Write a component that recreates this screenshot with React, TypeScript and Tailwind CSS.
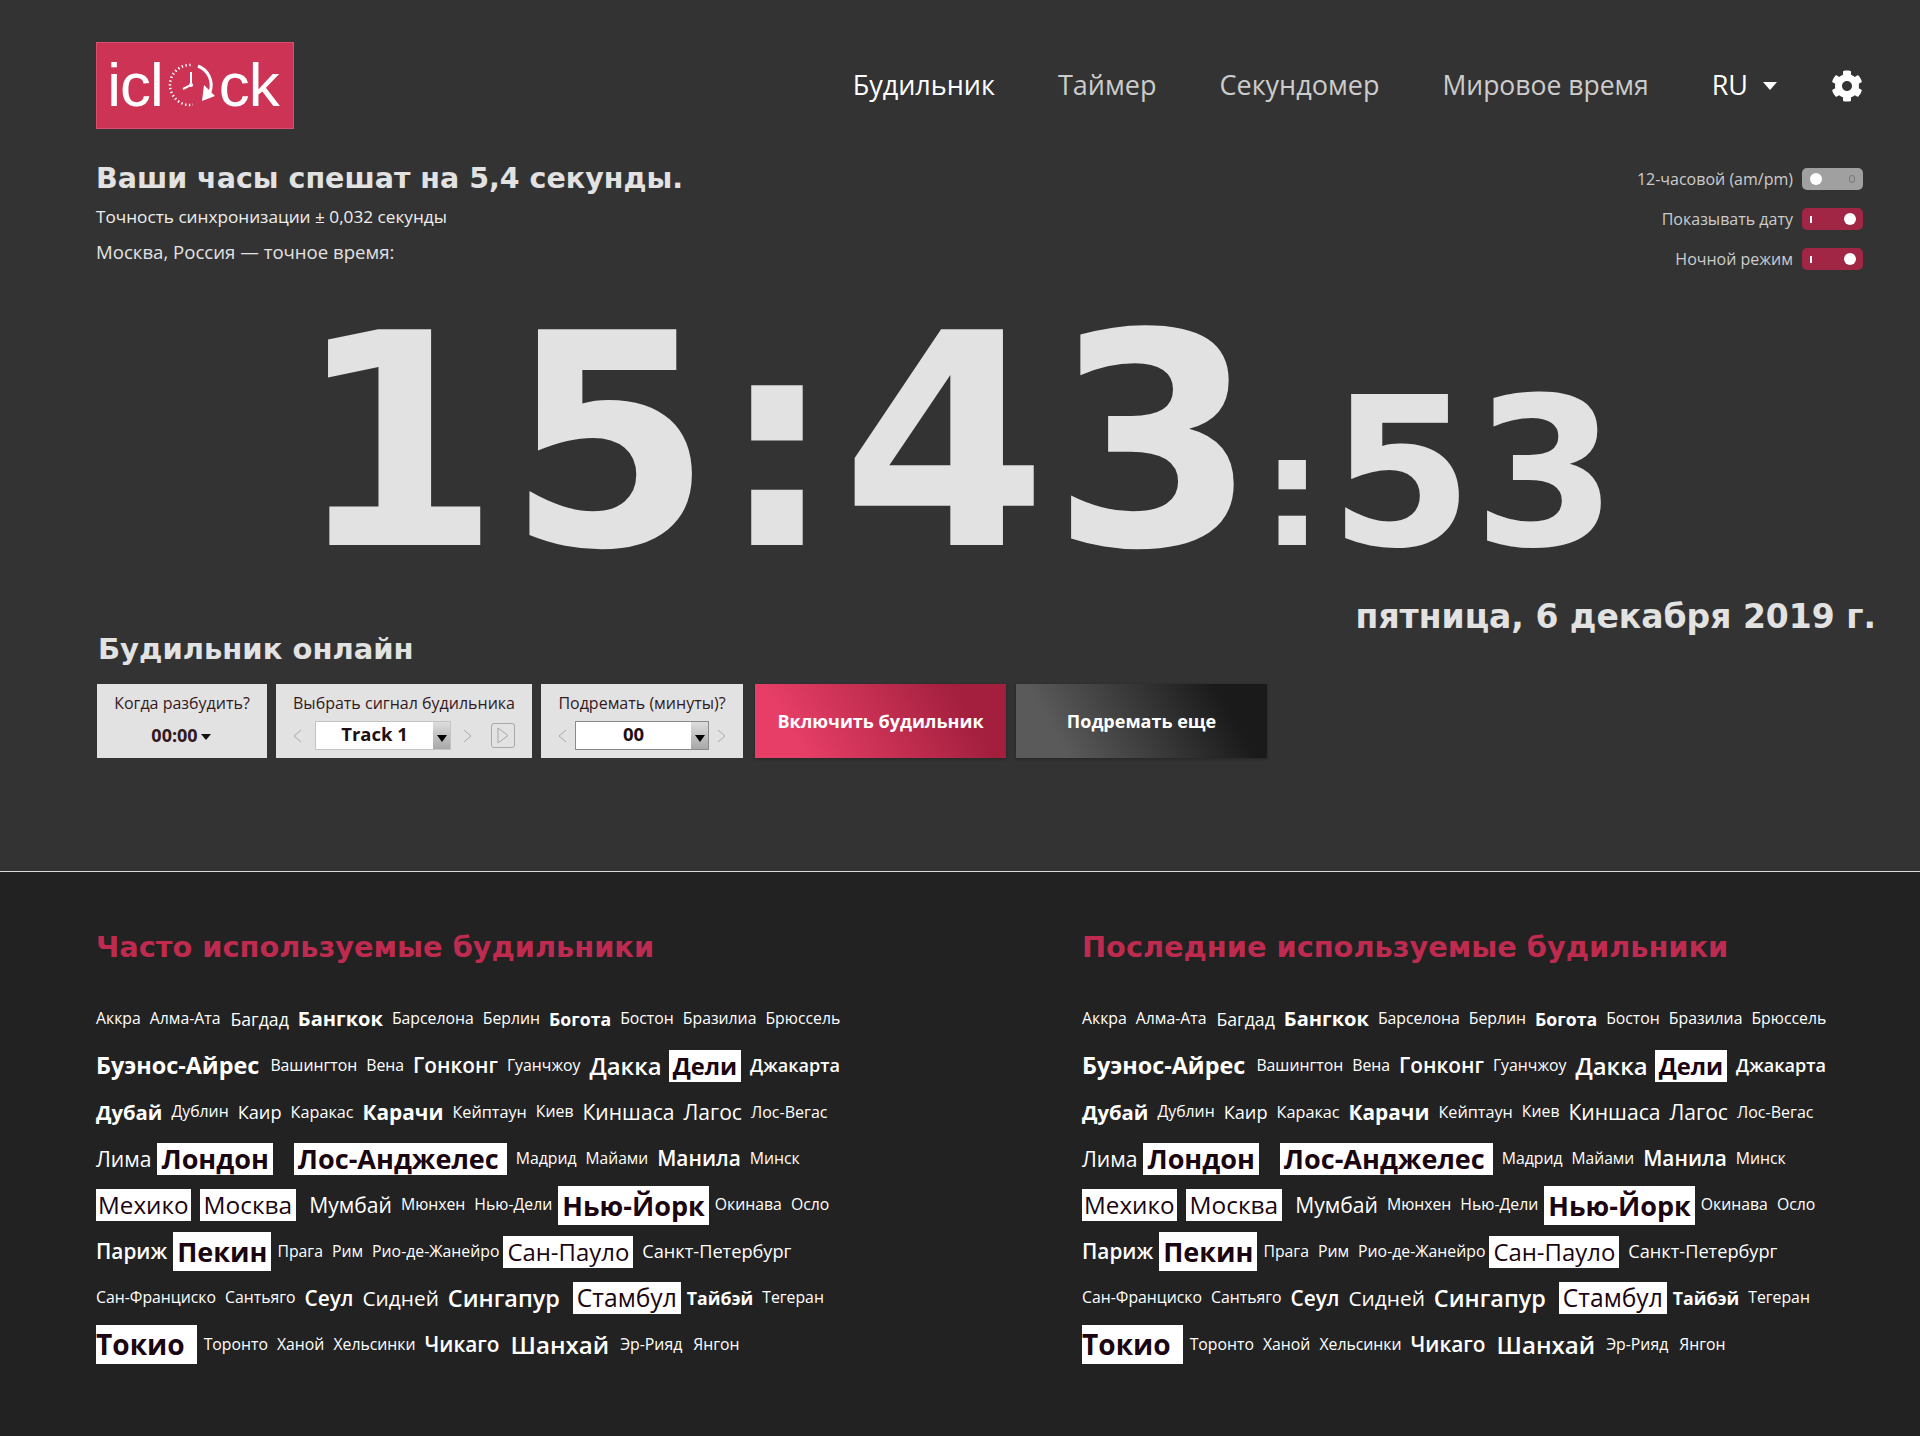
import { FaCog } from 'react-icons/fa';

// text, size, weight (0 normal, 1 semibold, 2 bold), white box classes, extra classes
type Word = [string, number, 0 | 1 | 2, string?, string?];

const rows: Word[][] = [
  [['Аккра', 15.2, 0], ['Алма-Ата', 15.2, 0], ['Багдад', 17, 0, undefined, 'ml-[1px]'], ['Бангкок', 19.3, 2], ['Барселона', 15.2, 0], ['Берлин', 15.2, 0], ['Богота', 17, 2], ['Бостон', 15.2, 0], ['Бразилиа', 15.2, 0], ['Брюссель', 15.2, 0]],
  [['Буэнос-Айрес', 22.5, 2], ['Вашингтон', 15.2, 0, undefined, 'ml-[2px]'], ['Вена', 15.2, 0], ['Гонконг', 20, 1], ['Гуанчжоу', 15.2, 0], ['Дакка', 23, 1], ['Дели', 22.8, 2, 'px-1 leading-[32px] ml-[-2px]'], ['Джакарта', 17.4, 1]],
  [['Дубай', 19.5, 2], ['Дублин', 15.2, 0], ['Каир', 17.5, 0], ['Каракас', 15.6, 0], ['Карачи', 20, 2], ['Кейптаун', 15.6, 0], ['Киев', 15.2, 0], ['Киншаса', 20.3, 0], ['Лагос', 20.3, 0], ['Лос-Вегас', 15.4, 0]],
  [['Лима', 20.3, 0], ['Лондон', 26, 2, 'px-1 leading-[32px] ml-[-3px]'], ['Лос-Анджелес', 26, 2, 'pl-1 pr-2 leading-[32px] ml-[12px]'], ['Мадрид', 15.2, 0], ['Майами', 15, 0], ['Манила', 20, 1], ['Минск', 15.2, 0]],
  [['Мехико', 23.3, 0, 'px-0.5 leading-[32px]'], ['Москва', 23.5, 0, 'px-1 leading-[32px]'], ['Мумбай', 20.3, 0, undefined, 'ml-1'], ['Мюнхен', 15.2, 0], ['Нью-Дели', 15.2, 0], ['Нью-Йорк', 26, 2, 'px-1 leading-[39px] mx-[-3px]'], ['Окинава', 15.2, 0], ['Осло', 15.2, 0]],
  [['Париж', 20, 1], ['Пекин', 26, 2, 'px-1 leading-[39px] mx-[-3px]'], ['Прага', 15.2, 0], ['Рим', 15.2, 0], ['Рио-де-Жанейро', 15.2, 0], ['Сан-Пауло', 23, 0, 'px-1 leading-[32px] ml-[-5px]'], ['Санкт-Петербург', 17.5, 0]],
  [['Сан-Франциско', 15.2, 0], ['Сантьяго', 15.2, 0], ['Сеул', 20, 1], ['Сидней', 20, 0], ['Сингапур', 22.5, 1], ['Стамбул', 23.7, 0, 'px-1 leading-[32px] ml-1 mr-[-3px]'], ['Тайбэй', 17, 2], ['Тегеран', 15.2, 0]],
  [['Токио', 27, 2, 'pr-3 leading-[39px] mr-[-2px]'], ['Торонто', 15.2, 0], ['Ханой', 15.2, 0], ['Хельсинки', 15.2, 0], ['Чикаго', 20, 1], ['Шанхай', 23.2, 1, undefined, 'ml-[2px]'], ['Эр-Рияд', 15.2, 0, undefined, 'ml-[2px]'], ['Янгон', 15.2, 0, undefined, 'ml-[2px]']],
];

const CityRows = () => (
  <div className="mt-[29px] flex flex-col">
    {rows.map((row, i) => (
      <div key={i} className="flex h-[46.5px] items-center gap-[9px] whitespace-nowrap">
        {row.map(([name, size, weight, box, extra]) => (
          <span
            key={name}
            style={{ fontSize: size * 1.04, fontWeight: weight === 2 ? 700 : weight === 1 ? 600 : 400 }}
            className={box ? `bg-white text-[#1a0510] ${box}` : `text-white ${extra ?? ''}`}
          >
            {name}
          </span>
        ))}
      </div>
    ))}
  </div>
);

const Toggle = ({ label, on }: { label: string; on: boolean }) => (
  <div className="flex h-[40px] items-center justify-end gap-[9px]">
    <span className="text-[16px] text-[#cccccc]">{label}</span>
    <div className={`relative h-[22px] w-[61px] rounded-[5px] ${on ? 'bg-[#a12645]' : 'bg-[#a0a0a0]'}`}>
      {on ? (
        <>
          <span className="absolute left-[8px] top-[8px] h-[7px] w-[2px] bg-white" />
          <span className="absolute right-[7px] top-[5px] h-[12px] w-[12px] rounded-full bg-white" />
        </>
      ) : (
        <>
          <span className="absolute left-[8px] top-[5px] h-[12px] w-[12px] rounded-full bg-white" />
          <span className="absolute right-[8px] top-[7px] h-[8px] w-[6px] rounded-full border border-[#777777]" />
        </>
      )}
    </div>
  </div>
);

const LogoClock = () => (
  <svg width="50" height="50" viewBox="0 0 50 50" fill="none" className="mx-[3px] mt-[1px]">
    <clipPath id="left">
      <rect x="0" y="0" width="27" height="50" />
    </clipPath>
    <circle cx="24" cy="25" r="20" stroke="white" strokeWidth="2.6" pathLength="100" strokeDasharray="1.1 2" clipPath="url(#left)" />
    <path d="M32 6 A20.5 20.5 0 0 1 44 32" stroke="white" strokeWidth="3" />
    <path d="M36 41 L49 36 L38 25 Z" fill="white" />
    <path d="M25 12 V25 L17 29" stroke="white" strokeWidth="2" />
    <circle cx="25" cy="25" r="2" fill="white" />
  </svg>
);

const SelectBox = ({ value, width, strong }: { value: string; width: string; strong?: boolean }) => (
  <div className={`flex h-[29px] ${width} border ${strong ? 'border-[#8a8a8a]' : 'border-[#c4c4c4]'} bg-white`}>
    <span className="flex-1 pb-[3px] text-center text-[18.5px] font-bold leading-[24px] text-[#220e12]">{value}</span>
    <span className="flex w-[17px] items-end justify-center bg-gradient-to-b from-[#dddddd] to-[#a8a8a8] pb-[7px]">
      <span className="h-0 w-0 border-x-[5px] border-t-[7px] border-x-transparent border-t-black" />
    </span>
  </div>
);

const Chevron = ({ left }: { left?: boolean }) => (
  <svg width="9" height="14" viewBox="0 0 9 14" fill="none" stroke="#a8a8a8" strokeWidth="1">
    <path d={left ? 'M8 1 L1 7 L8 13' : 'M1 1 L8 7 L1 13'} />
  </svg>
);

const App = () => (
  <div className="flex min-h-[1436px] flex-col bg-[#333333] font-['Open_Sans',sans-serif] text-[#e2e2e2]">
    <div className="h-[871px] pl-[96px] pr-[57px] pt-[42px]">
      <header className="flex items-center justify-between">
        <div className="flex h-[87px] w-[198px] items-center justify-center border border-[#d9506e] bg-[#cc3355] pb-[2px] pr-[4px] font-['Liberation_Sans',sans-serif] text-[62px] leading-none tracking-[-1px] text-white">
          <span>icl</span>
          <LogoClock />
          <span>ck</span>
        </div>
        <nav className="flex items-center gap-[63px] text-[27px] text-[#cccccc]">
          <span className="text-white">Будильник</span>
          <span>Таймер</span>
          <span>Секундомер</span>
          <span className="text-[26.5px]">Мировое время</span>
          <span className="flex items-center gap-[15px] text-white">
            RU
            <span className="h-0 w-0 border-x-[7px] border-t-[8px] border-x-transparent border-t-white" />
          </span>
          <FaCog className="ml-[-9px] text-[32px] text-white" />
        </nav>
      </header>

      <div className="mt-[29px] flex justify-between">
        <div>
          <h1 className="font-['DejaVu_Sans',sans-serif] text-[28.5px] font-bold leading-[42px]">Ваши часы спешат на 5,4 секунды.</h1>
          <p className="mt-[5px] text-[17.2px] leading-[24px] text-[#eeeeee]">Точность синхронизации ± 0,032 секунды</p>
          <p className="mt-[10px] text-[18.6px] leading-[26px]">Москва, Россия — точное время:</p>
        </div>
        <div className="pt-[1px]">
          <Toggle label="12-часовой (am/pm)" on={false} />
          <Toggle label="Показывать дату" on />
          <Toggle label="Ночной режим" on />
        </div>
      </div>

      <div className="ml-[-49px] mr-[-2px] mt-[5px] flex h-[318px] items-baseline justify-center font-['DejaVu_Sans',sans-serif] font-bold leading-none text-[#e2e2e2]">
        <span className="text-[296px] leading-[318px] tracking-[6px]">15</span>
        <span className="pr-[6px] text-[292px] leading-[318px]">:</span>
        <span className="text-[296px] leading-[318px] tracking-[4px]">43</span>
        <span className="pr-[6px] text-[155px] leading-[318px]">:</span>
        <span className="text-[207px] leading-[318px]">53</span>
      </div>

      <div className="flex items-start justify-between">
        <h2 className="mt-[27px] pl-[2px] font-['DejaVu_Sans',sans-serif] text-[29px] font-bold leading-[40px]">Будильник онлайн</h2>
        <p className="mr-[-13px] mt-[-9px] font-['DejaVu_Sans',sans-serif] text-[33px] font-bold leading-[48px]">пятница, 6 декабря 2019 г.</p>
      </div>

      <div className="mt-[15px] flex items-stretch pl-[1px]">
        <div className="flex h-[74px] w-[170px] flex-col items-center bg-[#e2e2e2] pt-[8px] text-[#33191e]">
          <span className="text-[16px] leading-[22px]">Когда разбудить?</span>
          <span className="mt-[9px] flex items-center gap-[3px] pr-[2px] text-[18px] font-bold leading-[24px]">
            00:00
            <span className="mt-[3px] h-0 w-0 border-x-[5px] border-t-[6px] border-x-transparent border-t-[#111111]" />
          </span>
        </div>
        <div className="ml-[9px] flex h-[74px] w-[256px] flex-col items-center bg-[#e2e2e2] pt-[8px] text-[#33191e]">
          <span className="text-[16px] leading-[22px]">Выбрать сигнал будильника</span>
          <div className="mt-[7px] flex items-center">
            <Chevron left />
            <span className="w-[13px]" />
            <SelectBox value="Track 1" width="w-[136px]" />
            <span className="w-[12px]" />
            <Chevron />
            <span className="w-[19px]" />
            <span className="flex h-[25px] w-[24px] items-center justify-center rounded-[3px] border border-[#a8a8a8]">
              <svg width="12" height="17" viewBox="0 0 12 17" fill="none" stroke="#a8a8a8">
                <path d="M1 1 L11 8.5 L1 16 Z" />
              </svg>
            </span>
          </div>
        </div>
        <div className="ml-[9px] flex h-[74px] w-[202px] flex-col items-center bg-[#e2e2e2] pt-[8px] text-[#33191e]">
          <span className="text-[16px] leading-[22px]">Подремать (минуты)?</span>
          <div className="mt-[7px] flex items-center gap-[8px]">
            <Chevron left />
            <SelectBox value="00" width="w-[134px]" strong />
            <Chevron />
          </div>
        </div>
        <button className="ml-[12px] h-[74px] w-[251px] bg-[linear-gradient(60deg,#e63e66_18%,#a31f3d_82%)] text-[18px] font-bold text-white shadow-[0_1px_3px_rgba(0,0,0,0.3)]">
          Включить будильник
        </button>
        <button className="ml-[10px] h-[74px] w-[251px] bg-[linear-gradient(60deg,#5a5a5a_18%,#1a1a1a_82%)] text-[18px] font-bold text-white shadow-[0_1px_3px_rgba(0,0,0,0.3)]">
          Подремать еще
        </button>
      </div>
    </div>

    <div className="grid flex-1 grid-cols-[986px_1fr] border-t border-[#dddddd] bg-[#222222] px-[96px] pt-[55px]">
      {['Часто используемые будильники', 'Последние используемые будильники'].map((title) => (
        <section key={title}>
          <h3 className="font-['DejaVu_Sans',sans-serif] text-[28.8px] font-bold leading-[40px] text-[#bf2a4f]">{title}</h3>
          <CityRows />
        </section>
      ))}
    </div>
  </div>
);

export default App;
